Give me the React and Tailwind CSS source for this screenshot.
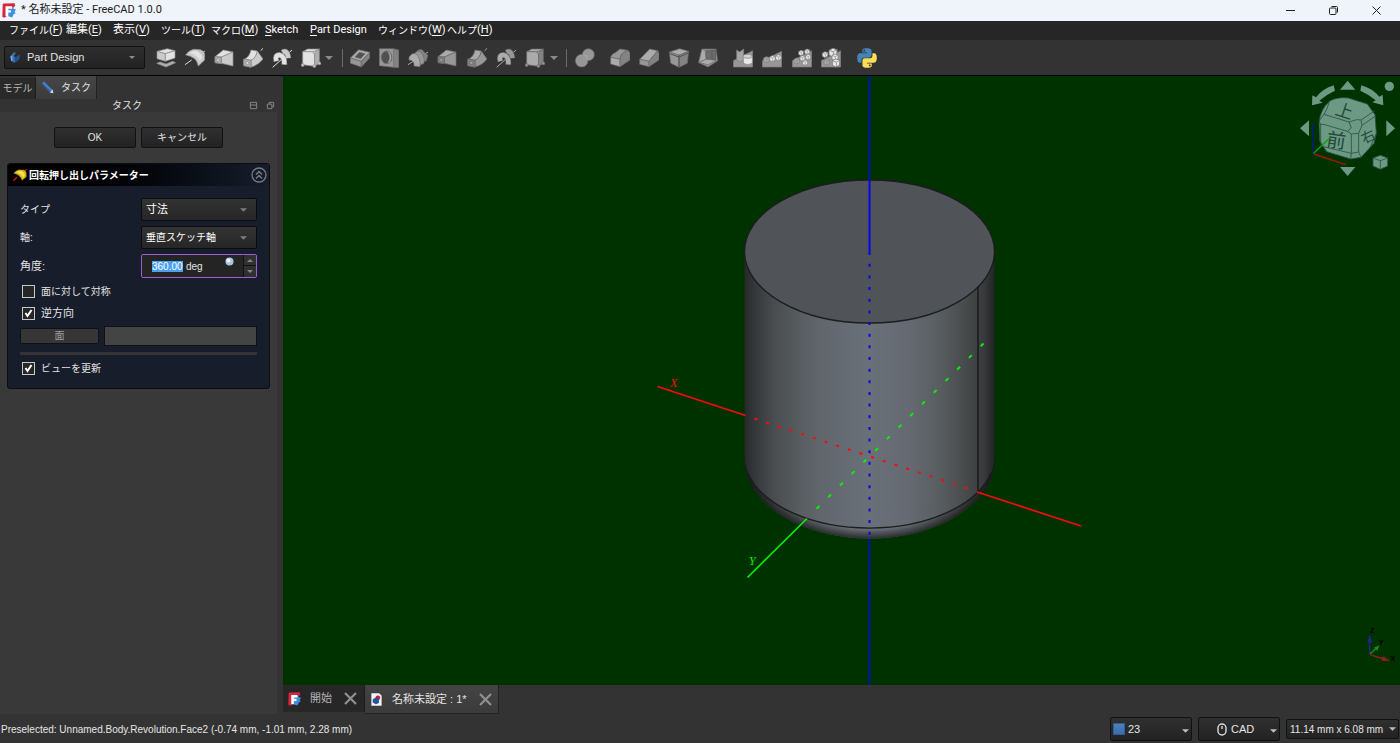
import React from "react";

const UI = "font-['Roboto','Noto_Sans_CJK_JP',sans-serif]";
const PANEL = "font-['Liberation_Sans','Noto_Sans_CJK_JP',sans-serif]";

const light = { a: "#e2e2e2", b: "#cbcbcb", c: "#b0b0b0", s: "#8c8c8c" };
const dim = { a: "#ababab", b: "#979797", c: "#838383", s: "#6a6a6a" };
const pale = { a: "#e8e8e8", b: "#d2d2d2", c: "#989898", s: "#7c7c7c" };

function Icon({ children, p = light }) {
  return (
    <svg viewBox="0 0 60 60" className="h-5 w-5 shrink-0" stroke={p.s} strokeWidth="2" strokeLinejoin="round" fill={p.b} aria-hidden="true">
      {children}
    </svg>
  );
}

const Pad = ({ p = light }) => (
  <Icon p={p}>
    <path d="M2 46 12 42 30 48 50 40 59 44 30 57Z" fill={p.c} />
    <path d="M3 10 34 2 57 8 28 17Z" fill={p.a} />
    <path d="M3 10 28 17V40L3 32Z" fill={p.b} />
    <path d="M28 17 57 8V30L28 40Z" fill={p.a} />
  </Icon>
);
const Revolve = ({ p = light }) => (
  <Icon p={p}>
    <path d="M0 50 20 36M52 16 60 8" stroke={p.a} strokeWidth="3" />
    <path d="M2 21Q10 8 26 4L46 5Q58 9 59 18V36L40 54Q36 38 27 31 16 23 2 21Z" fill={p.b} />
    <path d="M12 15Q22 8 34 8 48 14 52 28L44 38Q36 20 12 15Z" fill={p.a} stroke="none" />
    <path d="M34 5Q50 9 59 25" fill="none" stroke={p.c} />
  </Icon>
);
const Loft = ({ p = light }) => (
  <Icon p={p}>
    <path d="M3 26 28 6 57 12 22 27Z" fill={p.a} />
    <path d="M22 27 57 12V54L22 46Z" fill={p.b} />
    <path d="M3 26 22 28V47L3 44Z" fill={p.c} strokeWidth="3" />
    <path d="M9 32 16 33V41L9 40Z" fill={p.a} />
  </Icon>
);
const Sweep = ({ p = light }) => (
  <Icon p={p}>
    <path d="M53 8 60 1" stroke={p.a} strokeWidth="3" />
    <path d="M4 34Q20 26 24 6L43 9Q40 29 24 37Z" fill={p.a} />
    <path d="M24 37Q40 29 43 9L60 33Q46 52 24 57Z" fill={p.b} />
    <path d="M2 33 24 37V58L2 53Z" fill={p.c} strokeWidth="3" />
    <path d="M9 40 17 42V50L9 48Z" fill={p.a} />
  </Icon>
);
const Helix = ({ p = light }) => (
  <Icon p={p}>
    <path d="M2 58 60 6" stroke={p.a} strokeWidth="3" />
    <path d="M31 14Q46 4 49 31" fill="none" stroke={p.s} strokeWidth="17" />
    <path d="M32 13Q46 5 49 30" fill="none" stroke={p.b} strokeWidth="13" />
    <path d="M13 40Q8 20 23 21 38 24 37 50" fill="none" stroke={p.s} strokeWidth="17" />
    <path d="M13 39Q8 20 23 21 38 24 37 49" fill="none" stroke={p.a} strokeWidth="13" />
  </Icon>
);
const Cube = ({ p = light }) => (
  <Icon p={p}>
    <path d="M5 11 20 3H55L41 11Z" fill={p.a} />
    <path d="M5 11H41V55L5 50Z" fill={p.a} />
    <path d="M41 11 55 3V46L41 55Z" fill={p.c} />
    <g fill={p.b}>
      <circle cx="5" cy="51" r="4.500" />
      <circle cx="40" cy="54" r="4.500" />
      <circle cx="55" cy="46" r="4.500" />
      <circle cx="40" cy="13" r="4" />
    </g>
  </Icon>
);
const Pocket = ({ p = dim }) => (
  <Icon p={p}>
    <path d="M1 30 26 5 59 13 34 40Z" fill={p.a} />
    <path d="M1 30 34 40V57L1 46Z" fill={p.b} />
    <path d="M34 40 59 13V30L34 57Z" fill={p.c} />
    <path d="M15 27 28 13 45 17 32 32Z" fill="#505050" />
  </Icon>
);
const Hole = ({ p = dim }) => (
  <Icon p={p}>
    <path d="M1 2H44L59 6V58H44L1 53Z" fill={p.b} />
    <path d="M44 4 59 7V58H44Z" fill={p.c} />
    <ellipse cx="23" cy="28" rx="16" ry="19" fill="#505050" />
    <path d="M23 9C42 10 43 46 23 47 34 38 34 18 23 9Z" fill={p.a} />
  </Icon>
);
const Groove = ({ p = dim }) => (
  <Icon p={p}>
    <path d="M0 50 60 12" stroke={p.a} strokeWidth="3" />
    <path d="M28 8Q42 0 48 12L60 22 54 40 38 38Z" fill={p.c} />
    <path d="M18 18Q28 4 40 14 50 24 48 46L36 52Q34 30 18 18Z" fill={p.b} />
    <path d="M3 28Q12 12 24 18 38 28 36 56L18 54Q20 38 3 36Z" fill={p.a} />
  </Icon>
);
const Bool = ({ p = dim }) => (
  <Icon p={p}>
    <circle cx="40" cy="20" r="18" fill={p.b} />
    <circle cx="20" cy="38" r="19" fill={p.b} />
    <path d="M24 20A18 18 0 0 1 38 36" fill="none" stroke={p.a} strokeWidth="4" />
  </Icon>
);
const Fillet = ({ p = dim }) => (
  <Icon p={p}>
    <path d="M2 28Q4 18 16 14L30 3 54 7Q40 10 32 24L30 34Z" fill={p.b} />
    <path d="M2 28 30 34V56L2 48Z" fill={p.a} />
    <path d="M30 34Q34 12 54 7L60 14V36L30 56Z" fill={p.c} />
  </Icon>
);
const Chamfer = ({ p = dim }) => (
  <Icon p={p}>
    <path d="M2 34 32 3 56 8 30 40Z" fill={p.a} />
    <path d="M2 34 30 40V56L2 49Z" fill={p.b} />
    <path d="M30 40 56 8 60 14V36L30 56Z" fill={p.c} />
  </Icon>
);
const Draft = ({ p = dim }) => (
  <Icon p={p}>
    <path d="M1 12 32 2 59 10 30 22Z" fill={p.a} />
    <path d="M1 12 30 22V58L5 46Z" fill={p.b} />
    <path d="M30 22 59 10 55 46 30 58Z" fill={p.c} />
    <path d="M30 22V58M2 17 30 27 58 15" fill="none" stroke="#505050" strokeWidth="3" />
  </Icon>
);
const Shell = ({ p = dim }) => (
  <Icon p={p}>
    <path d="M12 3 54 3 59 38 30 57 2 44Z" fill={p.b} />
    <path d="M22 9 53 6V36L24 32Z" fill="#6c6c6c" stroke="#505050" />
    <path d="M12 3 22 9 24 34 2 44Z" fill={p.a} />
    <path d="M24 34 55 37 30 51 4 43Z" fill={p.a} />
    <path d="M42 8V34" stroke="#505050" />
  </Icon>
);
const Cell = ({ x, y, p, s = 9 }) => (
  <g transform={`translate(${x} ${y}) scale(${s / 9})`}>
    <path d="M0 4 8 0 17 3 16 14 8 18 0 14Z" fill={p.a} />
    <path d="M0 4 9 7 17 3M9 7V17" fill="none" strokeWidth="1.5" />
  </g>
);
const Mirror = ({ p = pale }) => (
  <Icon p={p}>
    <path d="M1 57V38L59 8V57Z" fill={p.c} />
    <path d="M11 6 20 12 32 3V36L20 42 11 36Z" fill="#a6a6a6" />
    <path d="M31 26Q44 16 58 26V46Q44 54 31 46Z" fill={p.a} />
    <ellipse cx="44" cy="25" rx="13" ry="6" fill={p.b} />
  </Icon>
);
const Linear = ({ p = pale }) => (
  <Icon p={p}>
    <path d="M1 57V38L59 10V57Z" fill={p.c} />
    <Cell x={5} y={26} p={dim} />
    <Cell x={23} y={23} p={p} />
    <Cell x={41} y={20} p={p} />
  </Icon>
);
const Polar = ({ p = pale }) => (
  <Icon p={p}>
    <path d="M1 57V38L59 8V57Z" fill={p.c} />
    <Cell x={20} y={7} p={p} s={8} />
    <Cell x={38} y={3} p={p} s={8} />
    <Cell x={24} y={23} p={p} s={8} />
    <Cell x={41} y={19} p={p} s={8} />
    <Cell x={6} y={30} p={dim} s={9} />
    <Cell x={32} y={36} p={p} s={8} />
  </Icon>
);
const Multi = ({ p = pale }) => (
  <Icon p={p}>
    <path d="M1 57V38L59 8V57Z" fill={p.c} />
    <Cell x={24} y={1} p={p} s={13} />
    <Cell x={4} y={11} p={p} s={9} />
    <Cell x={33} y={18} p={p} s={10} />
    <Cell x={9} y={33} p={dim} s={9} />
    <Cell x={34} y={33} p={p} s={12} />
  </Icon>
);
const Python = () => (
  <svg viewBox="0 0 110 110" className="h-5 w-5" aria-hidden="true">
    <path fill="#4584b6" d="M54 1C27 1 29 13 29 13v12h26v4H18S1 27 1 55s15 26 15 26h9V68s0-15 15-15h26s14 0 14-14V15S82 1 54 1ZM40 9a5 5 0 1 1 0 10 5 5 0 0 1 0-10Z" />
    <path fill="#ffde57" d="M56 109c27 0 25-12 25-12V85H55v-4h37s17 2 17-26-15-26-15-26h-9v13s0 15-15 15H44s-14 0-14 14v24s-2 14 26 14Zm14-8a5 5 0 1 1 0-10 5 5 0 0 1 0 10Z" />
  </svg>
);

function Logo({ className }) {
  return (
    <svg viewBox="0 0 40 42" className={className} aria-hidden="true">
      <path d="M14 12 34 10 32 15 40 18 36 24 39 29 33 32 29 41 16 37Z" fill="#3f8fdf" />
      <path d="M2 4Q2 1 6 1L36 0 38 8 32 12 14 14 12 39 5 42 1 39Z" fill="#d9263c" />
      <path d="M10 9H29V16H18V20H26V27H18V37H10Z" fill="#fff" />
    </svg>
  );
}

function Caret({ className }) {
  return (
    <svg viewBox="0 0 8 4" className={className} aria-hidden="true">
      <path d="M0 0H8L4 4Z" fill="currentColor" />
    </svg>
  );
}

function ToolButton({ label, children }) {
  return (
    <button type="button" aria-label={label} className="flex items-center justify-center">
      {children}
    </button>
  );
}

const MoreButton = ({ label }) => (
  <button type="button" aria-label={label} className="flex h-5 w-3 shrink-0 items-center text-[#8a8a8a]">
    <Caret className="h-1 w-2" />
  </button>
);

const menus = [
  ["ファイル", "F", "text-[10px]"],
  ["編集", "E", "text-[11px]"],
  ["表示", "V", "text-[11px]"],
  ["ツール", "T", "text-[10px]"],
  ["マクロ", "M", "text-[10px]"],
];

const MenuItem = ({ label, k, size }) => (
  <button type="button" className="flex items-center whitespace-nowrap text-left">
    <span className={size}>{label}</span>
    <span className="text-[11px]">
      (<u className="underline-offset-2">{k}</u>)
    </span>
  </button>
);

function TitleBar() {
  return (
    <header className={`flex h-[21px] shrink-0 items-center bg-[#eff3fa] text-[11px] text-[#202020] ${UI}`}>
      <Logo className="ml-[2px] h-[15px] w-[14px]" />
      <h1 className="ml-[5px] whitespace-nowrap">* 名称未設定 - FreeCAD 1.0.0</h1>
      <div className="ml-auto flex pr-[2px]">
        {[
          ["最小化", "M1 5.5H10"],
          ["元に戻す", "M1.5 4Q1.5 3 2.5 3H7Q8 3 8 4V8.500Q8 9.500 7 9.500H2.500Q1.500 9.500 1.500 8.500ZM3.500 1.500H8.500Q9.500 1.500 9.500 2.500V7.500"],
          ["閉じる", "M1.500 1.500 9.500 9.500M9.500 1.500 1.500 9.500"],
        ].map(([label, d]) => (
          <button key={label} type="button" aria-label={label} className="flex w-[43px] items-center justify-center">
            <svg viewBox="0 0 11 11" className="h-[11px] w-[11px]" fill="none" stroke="#222" strokeWidth="1">
              <path d={d} />
            </svg>
          </button>
        ))}
      </div>
    </header>
  );
}

function MenuBar() {
  return (
    <nav className={`grid h-[19px] shrink-0 grid-cols-[57px_47px_48px_50px_54px_45px_68px_69px_60px] items-center bg-[#262626] pl-[9px] text-white ${UI}`}>
      {menus.map(([label, k, size]) => (
        <MenuItem key={k} label={label} k={k} size={size} />
      ))}
      <button type="button" className="text-left text-[11px]">
        <u className="underline-offset-2">S</u>ketch
      </button>
      <button type="button" className="text-left text-[11px]">
        <u className="underline-offset-2">P</u>art Design
      </button>
      <MenuItem label="ウィンドウ" k="W" size="text-[10px]" />
      <MenuItem label="ヘルプ" k="H" size="text-[10px]" />
    </nav>
  );
}

const Sep = () => <span className="h-[18px] w-px shrink-0 bg-[#6a6a6a]" />;

function ToolBar() {
  return (
    <div className={`flex h-9 shrink-0 items-center border-b border-black bg-[#333] ${PANEL}`}>
      <div className="relative ml-[4px] flex h-[23px] w-[141px] shrink-0 items-center rounded-[2px] border border-[#111] bg-linear-to-b from-[#2e2e2e] to-[#222]">
        <svg viewBox="0 0 30 34" className="ml-[5px] h-[11px] w-[10px]" aria-hidden="true">
          <path d="M1 12 12 1 18 3 12 10 14 18 24 12 29 9 28 22 14 33 3 28Z" fill="#3f74b8" />
          <path d="M1 12 7 14 6 28 3 28Z" fill="#7fb0e6" />
          <path d="M14 18 29 9 28 22 14 33Z" fill="#254f8c" />
        </svg>
        <select aria-label="ワークベンチ" className="h-full min-w-0 flex-1 appearance-none bg-transparent pl-[7px] text-[11px] text-[#e4e4e4] outline-none">
          <option>Part Design</option>
        </select>
        <Caret className="pointer-events-none absolute right-[9px] h-[3px] w-[6px] text-[#8a8a8a]" />
      </div>
      <div className="ml-[6px] grid w-[174px] shrink-0 grid-cols-6">
        <ToolButton label="パッド"><Pad /></ToolButton>
        <ToolButton label="回転押し出し"><Revolve /></ToolButton>
        <ToolButton label="ロフト"><Loft /></ToolButton>
        <ToolButton label="パイプ"><Sweep /></ToolButton>
        <ToolButton label="らせん"><Helix /></ToolButton>
        <ToolButton label="加算プリミティブ"><Cube /></ToolButton>
      </div>
      <MoreButton label="加算プリミティブを選択" />
      <div className="w-[5px] shrink-0" />
      <Sep />
      <div className="ml-[2px] grid w-[205px] shrink-0 grid-cols-7">
        <ToolButton label="ポケット"><Pocket /></ToolButton>
        <ToolButton label="ホール"><Hole /></ToolButton>
        <ToolButton label="溝"><Groove /></ToolButton>
        <ToolButton label="減算ロフト"><Loft p={dim} /></ToolButton>
        <ToolButton label="減算パイプ"><Sweep p={dim} /></ToolButton>
        <ToolButton label="減算らせん"><Helix p={dim} /></ToolButton>
        <ToolButton label="減算プリミティブ"><Cube p={dim} /></ToolButton>
      </div>
      <MoreButton label="減算プリミティブを選択" />
      <div className="w-[4px] shrink-0" />
      <Sep />
      <div className="ml-[3px] grid w-[29px] shrink-0">
        <ToolButton label="ブーリアン演算"><Bool /></ToolButton>
      </div>
      <div className="ml-[6px] grid w-[118px] shrink-0 grid-cols-4">
        <ToolButton label="フィレット"><Fillet /></ToolButton>
        <ToolButton label="面取り"><Chamfer /></ToolButton>
        <ToolButton label="抜き勾配"><Draft /></ToolButton>
        <ToolButton label="厚み"><Shell /></ToolButton>
      </div>
      <div className="ml-[5px] grid w-[118px] shrink-0 grid-cols-4">
        <ToolButton label="鏡像"><Mirror /></ToolButton>
        <ToolButton label="直線状パターン"><Linear /></ToolButton>
        <ToolButton label="円状パターン"><Polar /></ToolButton>
        <ToolButton label="マルチ変換"><Multi /></ToolButton>
      </div>
      <div className="ml-[6px] grid w-[29px] shrink-0">
        <ToolButton label="Python"><Python /></ToolButton>
      </div>
    </div>
  );
}

const darkButton = "rounded-[2px] border border-[#111] bg-linear-to-b from-[#303030] to-[#222]";

function Combo({ id, label, value, size = "text-[10px]" }) {
  return (
    <>
      <label htmlFor={id} className="self-center">{label}</label>
      <div className="relative h-[23px] rounded-[2px] border border-[#0c0c0c] bg-linear-to-b from-[#333] to-[#262626]">
        <select id={id} className={`block h-full w-full appearance-none bg-transparent pl-[4px] text-white outline-none ${size}`}>
          <option>{value}</option>
        </select>
        <Caret className="pointer-events-none absolute right-[9px] top-[9px] h-[4px] w-[7px] text-[#7c7c7c]" />
      </div>
    </>
  );
}

function Check({ label, checked, size = "text-[10px]" }) {
  return (
    <label className={`flex h-[15px] items-center gap-[6px] pl-[2px] ${size}`}>
      <span className="grid h-[13px] w-[13px]">
        <input type="checkbox" defaultChecked={checked} className="peer col-start-1 row-start-1 h-[13px] w-[13px] appearance-none border border-[#c9c9c9] bg-[#262626]" />
        <svg viewBox="0 0 13 13" className="pointer-events-none invisible col-start-1 row-start-1 h-[13px] w-[13px] peer-checked:visible" fill="none" stroke="#fff" strokeWidth="2">
          <path d="M3.500 6 5.500 9 9.500 3" />
        </svg>
      </span>
      {label}
    </label>
  );
}

function SidePanel() {
  return (
    <aside className={`flex w-[283px] shrink-0 flex-col bg-[#333] text-[10px] text-[#e2e2e2] ${PANEL}`}>
      <div role="tablist" className="flex h-[23px] shrink-0 items-end">
        <button type="button" role="tab" aria-selected="false" className="h-[21px] w-9 border-r border-[#1c1c1c] bg-[#2a2a2a] text-[#b8b8b8]">モデル</button>
        <button type="button" role="tab" aria-selected="true" className="flex h-[23px] w-[61px] items-center border-r border-[#222] bg-linear-to-b from-[#474747] to-[#3b3b3b] pl-[5px]">
          <svg viewBox="0 0 40 40" className="h-[13px] w-[13px]" aria-hidden="true">
            <path d="M2 8 10 1 36 26 38 38 27 35Z" fill="#2f64a8" />
            <path d="M6 4 34 31" stroke="#5488c4" strokeWidth="4" />
            <path d="M27 35 36 26 38 38Z" fill="#e0d8c8" />
          </svg>
          <span className="ml-[7px]">タスク</span>
        </button>
      </div>
      <div className="flex h-[13px] shrink-0 items-center">
        <span className="flex-1 pl-[112px] text-left">タスク</span>
        <div className="flex gap-2 pr-[8px]">
          {["M1.500 1.500H8.500V8.500H1.500ZM1.500 4.500H8.500", "M1.500 3.500H6.500V8.500H1.500ZM3.500 3.500V1.500H8.500V6.500H6.500"].map((d, i) => (
            <button key={d} type="button" aria-label={i ? "フロート" : "折りたたむ"}>
              <svg viewBox="0 0 10 10" className="h-[9px] w-[9px]" fill="none" stroke="#8c8c8c">
                <path d={d} />
              </svg>
            </button>
          ))}
        </div>
      </div>
      <div className="mr-[6px] flex-1 bg-[#393939] pl-[7px] pr-[7px] pt-[15px]">
        <div className="flex justify-center gap-[5px]">
          <button type="button" className={`h-[21px] w-[82px] ${darkButton}`}>OK</button>
          <button type="button" className={`h-[21px] w-[82px] ${darkButton}`}>キャンセル</button>
        </div>
        <section className="mt-[15px] rounded-[3px] border border-[#0b0d12] bg-[#171d2a]">
          <div className="flex h-[22px] items-center rounded-t-[2px] bg-linear-to-r from-black to-[#171d2a] px-[5px]">
            <svg viewBox="0 0 42 36" className="h-[12px] w-[14px]" aria-hidden="true">
              <path d="M1 35 12 25M34 6 41 1" stroke="#d01818" strokeWidth="4" />
              <path d="M2 13Q8 4 18 2L32 3Q40 6 40 12V24L27 34Q24 25 18 20 11 15 2 13Z" fill="#dcb818" stroke="#7a6500" />
              <path d="M9 10Q16 5 24 5 33 9 36 18L30 26Q25 14 9 10Z" fill="#f8e050" />
            </svg>
            <h2 className="ml-[2px] flex-1 text-[10px] font-bold text-white">回転押し出しパラメーター</h2>
            <button type="button" aria-label="折りたたむ" className="-mr-[3px]">
              <svg viewBox="0 0 16 16" className="h-4 w-4" fill="none" stroke="#777b84">
                <circle cx="8" cy="8" r="7" strokeWidth="1.300" />
                <path d="M5 7.500 8 4.500 11 7.500M5 11.500 8 8.500 11 11.500" strokeWidth="1.500" />
              </svg>
            </button>
          </div>
          <div className="px-[12px] pb-[12px] pt-[12px]">
            <div className="grid grid-cols-[minmax(0,1fr)_116px] gap-y-[5px]">
              <Combo id="type" label="タイプ" value="寸法" size="text-[11px]" />
              <Combo id="axis" label="軸:" value="垂直スケッチ軸" />
              <label htmlFor="angle" className="self-center text-[11px] leading-4">角度:</label>
              <div className="flex h-6 items-center rounded-[2px] border border-[#9a5fd0] bg-[#242424] pl-[10px]">
                <input id="angle" defaultValue="360.00" className="w-[31px] bg-[#4a9ff0] p-0 text-[10px] leading-[11px] text-white outline-none" />
                <span className="ml-[3px] flex-1">deg</span>
                <svg viewBox="0 0 9 9" className="mr-[9px] mt-[2px] h-[9px] w-[9px] self-start" aria-hidden="true">
                  <circle cx="4.500" cy="4.500" r="4" fill="#a9c4e2" />
                  <circle cx="3.500" cy="3.500" r="2" fill="#f2f7fc" />
                </svg>
                <div className="grid h-full w-[13px] grid-rows-2 border-l border-[#111] bg-[#303030] text-[#858585]">
                  <button type="button" aria-label="増やす" className="flex items-center justify-center border-b border-[#111]">
                    <Caret className="h-[3px] w-[6px] rotate-180" />
                  </button>
                  <button type="button" aria-label="減らす" className="flex items-center justify-center">
                    <Caret className="h-[3px] w-[6px]" />
                  </button>
                </div>
              </div>
            </div>
            <div className="mt-[6px] grid gap-[7px]">
              <Check label="面に対して対称" />
              <Check label="逆方向" checked size="text-[11px]" />
            </div>
            <div className="mt-[5px] flex items-center gap-[5px]">
              <button type="button" className="h-4 w-[79px] rounded-[2px] border border-[#111] bg-[#363636] leading-none text-[#a0a0a0]">面</button>
              <input aria-label="面" className="h-5 min-w-0 flex-1 border border-[#111] bg-[#444]" />
            </div>
            <hr className="mb-[6px] mt-[6px] h-[3px] border-0 bg-[#343434]" />
            <Check label="ビューを更新" checked />
          </div>
        </section>
      </div>
    </aside>
  );
}

function Model() {
  return (
    <svg viewBox="283 76 1117 609" className="h-full w-full" aria-label="3D ビュー">
      <defs>
        <linearGradient id="side">
          <stop offset="0" stopColor="#26282a" />
          <stop offset=".04" stopColor="#35383a" />
          <stop offset=".12" stopColor="#494d4f" />
          <stop offset=".22" stopColor="#585d60" />
          <stop offset=".3" stopColor="#61666d" />
          <stop offset=".5" stopColor="#6a7078" />
          <stop offset=".66" stopColor="#656a72" />
          <stop offset=".78" stopColor="#585d60" />
          <stop offset=".9" stopColor="#454849" />
          <stop offset=".96" stopColor="#37393a" />
          <stop offset="1" stopColor="#222425" />
        </linearGradient>
        <radialGradient id="lip" gradientUnits="userSpaceOnUse" cx="0" cy="0" r="1" gradientTransform="translate(869.5 460) scale(125 78.5)">
          <stop offset=".88" stopColor="#111" stopOpacity="0" />
          <stop offset="1" stopColor="#111" stopOpacity=".7" />
        </radialGradient>
      </defs>
      <path d="M869.500 76V180M869.500 538V685" stroke="#0810b4" strokeWidth="2" />
      <path d="M744.500 456V460A125 78.500 0 0 0 994.500 460V456Z" fill="url(#side)" />
      <path d="M744.500 456V460A125 78.500 0 0 0 994.500 460V456Z" fill="url(#lip)" />
      <path d="M744.500 251V456A125 72 0 0 0 994.500 456V251Z" fill="url(#side)" />
      <path d="M748 473A125 72 0 0 0 991 473" fill="none" stroke="#1b1d1e" strokeWidth="1.400" />
      <ellipse cx="869.500" cy="251.500" rx="125" ry="71.500" fill="#505358" stroke="#1b1d1e" strokeWidth="1.400" />
      <path d="M978 287V492" stroke="#1b1d1e" strokeWidth="1.600" />
      <path d="M869.500 180V255" stroke="#0505ee" strokeWidth="2" />
      <path d="M869.500 263.800V537" stroke="#0505ee" strokeWidth="2" strokeDasharray="3 8.650" />
      <g stroke="#ff0808" strokeWidth="1.700">
        <path d="M657.500 386.500 745.500 415.500M977 492 1081 526" />
        <path d="M754.500 418.600 968 488.600" strokeDasharray="3 9.280" strokeWidth="2" />
      </g>
      <g stroke="#08f008" strokeWidth="1.700">
        <path d="M747.500 577.500 807 518.500" />
        <path d="M816.500 508.800 984 343" strokeDasharray="4 12.500" strokeWidth="2" />
      </g>
      <g fontFamily="Liberation Serif, serif" fontStyle="italic" fontSize="12">
        <text x="670" y="387" fill="#ff0808">X</text>
        <text x="749" y="565" fill="#08f008">Y</text>
      </g>
    </svg>
  );
}

function NavCube() {
  return (
    <svg viewBox="0 18 360 342" className="absolute right-0 top-0 h-[114px] w-[120px]" fill="#6c9984" strokeLinejoin="round" aria-label="ナビゲーションキューブ">
      <path d="M203 32 226 59H180Z" />
      <path d="M203 318 226 291H180Z" />
      <path d="M60 175 87 151V199Z" />
      <path d="M345 175 319 151V199Z" />
      <circle cx="328" cy="49" r="14" />
      <path d="M161 46Q128 56 108 82L97 76 96 106 128 98 118 92Q138 74 165 62Z" />
      <path d="M244 46Q278 56 298 80L308 74 310 106 277 97 287 91Q268 74 241 62Z" />
      <g stroke="#2b5142" strokeWidth="2.500">
        <path d="M148 94Q170 80 205 84L262 102 285 134 289 190 282 220 243 262 212 267 140 245 119 212 117 155Q122 118 148 94Z" />
        <path d="M148 94 141 116 132 133 207 156 230 149 243 150 285 122M132 133 118 152 120 162 134 164 202 184 214 174 207 156M243 150 246 166 236 190 214 192 202 184M214 192V248L212 267M236 190V246L243 262M122 163V222L140 245M246 166 287 138M289 190 270 234M130 230 214 250 236 246" fill="none" />
        <path d="M279 264 301 256 323 264V288L301 298 279 288Z" />
        <path d="M279 264 301 272 323 264M301 272V298" fill="none" />
      </g>
      <g fill="#24483a" fontFamily="Noto Sans CJK JP, sans-serif">
        <text x="168" y="142" fontSize="52" transform="rotate(18 194 122)">上</text>
        <text x="140" y="232" fontSize="58" transform="rotate(8 168 210)">前</text>
        <text x="243" y="215" fontSize="42" transform="rotate(-24 264 200)">右</text>
      </g>
      <g fill="none" strokeWidth="4">
        <path d="M99 252V160" stroke="#0a1a8c" />
        <path d="M101 250 150 203" stroke="#10a010" />
        <path d="M101 252 197 284" stroke="#a01808" />
      </g>
    </svg>
  );
}

function AxisCross() {
  return (
    <svg viewBox="789 15 111 120" className="absolute bottom-5 right-0 h-10 w-[37px]" aria-label="座標軸">
      <g strokeWidth="4">
        <path d="M809 103V60" stroke="#24248f" />
        <path d="M810 102 830 83" stroke="#1f8a1f" />
        <path d="M810 104 850 117" stroke="#8f2020" />
      </g>
      <path d="M809 43 816 68H802Z" fill="#24248f" />
      <path d="M838 76 832 92 822 83Z" fill="#1f8a1f" />
      <path d="M870 123 844 122 849 109Z" fill="#8f2020" />
      <g fontFamily="Liberation Sans, sans-serif" fontWeight="bold" fontSize="21" fill="#000">
        <text x="811" y="39">Z</text>
        <text x="836" y="76">Y</text>
        <text x="871" y="123">X</text>
      </g>
    </svg>
  );
}

const CloseTab = () => (
  <button type="button" aria-label="タブを閉じる" className="flex items-center">
    <svg viewBox="0 0 13 13" className="h-[13px] w-[13px]" stroke="#909090" strokeWidth="2.200">
      <path d="M1 1 12 12M12 1 1 12" />
    </svg>
  </button>
);

function DocTabs() {
  return (
    <div className={`flex h-[29px] shrink-0 items-start bg-[#333] text-[11px] ${PANEL}`}>
      <div className="flex h-[27px] w-[82px] items-center border-r border-[#1c1c1c] bg-[#272727] pl-[5px] pr-[7px] text-[#b5b5b5]">
        <Logo className="h-[14px] w-[13px]" />
        <span className="ml-[9px] flex-1">開始</span>
        <CloseTab />
      </div>
      <div className="flex h-[29px] w-[134px] items-center whitespace-nowrap border-b border-r border-[#222] bg-linear-to-b from-[#444] to-[#3b3b3b] pl-[6px] pr-[6px] text-[#e4e4e4]">
        <svg viewBox="0 0 32 38" className="h-[13px] w-[11px]" aria-hidden="true">
          <path d="M1 1H24L31 8V37H1Z" fill="#f4f4f4" />
          <circle cx="20" cy="14" r="7" fill="#cf2230" />
          <path d="M5 18 14 13 23 17V29L14 33 5 28Z" fill="#24559c" />
        </svg>
        <span className="ml-[10px] flex-1">名称未設定 : 1*</span>
        <CloseTab />
      </div>
    </div>
  );
}

function StatusBar() {
  return (
    <footer className={`flex h-[29px] shrink-0 items-center gap-[6px] bg-[#333] pb-px pl-px pr-px pt-[2px] text-[11px] text-[#e6e6e6] ${PANEL}`}>
      <p className="flex-1 whitespace-nowrap text-[10px]">Preselected: Unnamed.Body.Revolution.Face2 (-0.74 mm, -1.01 mm, 2.28 mm)</p>
      <button type="button" className={`flex h-6 w-[82px] items-center pl-[2px] pr-[2px] ${darkButton}`}>
        <span className="h-3 w-3 border border-[#2f5c95] bg-linear-to-b from-[#4b80bf] to-[#3c6cab]" />
        <span className="ml-[3px] flex-1 text-left">23</span>
        <Caret className="mt-[3px] h-[4px] w-[7px] text-[#bdbdbd]" />
      </button>
      <button type="button" className={`flex h-6 w-[82px] items-center pl-[18px] pr-[2px] ${darkButton}`}>
        <svg viewBox="0 0 10 13" className="h-[13px] w-[10px]" fill="none" stroke="#dcdcdc" strokeWidth="1.400" aria-hidden="true">
          <rect x="1" y="1" width="8" height="11" rx="4" />
          <path d="M5 3V6" />
        </svg>
        <span className="ml-[4px] flex-1 text-left">CAD</span>
        <Caret className="mt-[3px] h-[4px] w-[7px] text-[#bdbdbd]" />
      </button>
      <button type="button" className={`flex h-5 w-[113px] items-center whitespace-nowrap pl-[3px] pr-[2px] text-[10px] ${darkButton}`}>
        <span className="flex-1 text-left">11.14 mm x 6.08 mm</span>
        <Caret className="h-[4px] w-[7px] text-[#bdbdbd]" />
      </button>
    </footer>
  );
}

export default function App() {
  return (
    <div className="flex h-screen flex-col overflow-hidden bg-[#333]">
      <TitleBar />
      <MenuBar />
      <ToolBar />
      <div className="flex min-h-0 flex-1">
        <SidePanel />
        <main className="flex min-w-0 flex-1 flex-col">
          <div className="relative min-h-0 flex-1 bg-[#003200]">
            <Model />
            <NavCube />
            <AxisCross />
          </div>
          <DocTabs />
        </main>
      </div>
      <StatusBar />
    </div>
  );
}
